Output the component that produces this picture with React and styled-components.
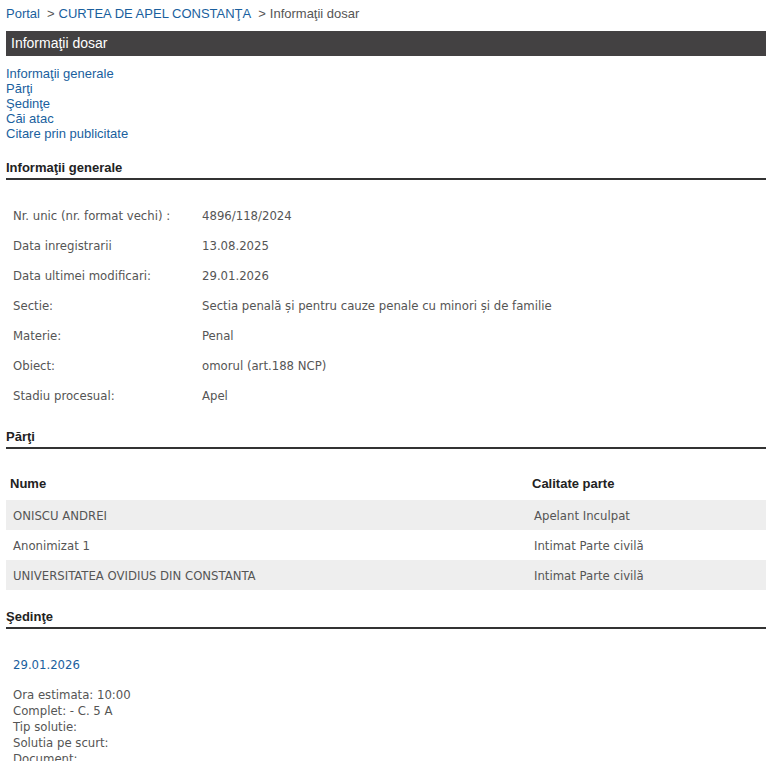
import React from "react";
import styled, { createGlobalStyle } from "styled-components";

const GlobalStyle = createGlobalStyle`
  body {
    margin: 0;
    background: #fff;
    font-family: "Liberation Sans", Arial, sans-serif;
  }
`;

const info = [
  ["Nr. unic (nr. format vechi) :", "4896/118/2024"],
  ["Data inregistrarii", "13.08.2025"],
  ["Data ultimei modificari:", "29.01.2026"],
  ["Sectie:", "Sectia penală și pentru cauze penale cu minori și de familie"],
  ["Materie:", "Penal"],
  ["Obiect:", "omorul (art.188 NCP)"],
  ["Stadiu procesual:", "Apel"],
];

const parti = [
  ["ONISCU ANDREI", "Apelant Inculpat"],
  ["Anonimizat 1", "Intimat Parte civilă"],
  ["UNIVERSITATEA OVIDIUS DIN CONSTANTA", "Intimat Parte civilă"],
];

const sedinta = [
  "Ora estimata: 10:00",
  "Complet: - C. 5 A",
  "Tip solutie:",
  "Solutia pe scurt:",
  "Document:",
];

export default function App() {
  return (
    <>
      <GlobalStyle />
      <Page>
        <Breadcrumb>
          <Crumb href="#">Portal</Crumb>
          <Sep>&gt;</Sep>
          <Crumb href="#">CURTEA DE APEL CONSTANŢA</Crumb>
          <Sep>&gt;</Sep>
          <span>Informaţii dosar</span>
        </Breadcrumb>
        <TitleBar>Informaţii dosar</TitleBar>
        <Nav>
          <NavLink href="#">Informaţii generale</NavLink>
          <NavLink href="#">Părţi</NavLink>
          <NavLink href="#">Şedinţe</NavLink>
          <NavLink href="#">Căi atac</NavLink>
          <NavLink href="#">Citare prin publicitate</NavLink>
        </Nav>

        <SectionTitle>Informaţii generale</SectionTitle>
        <InfoList>
          {info.map(([label, value]) => (
            <InfoRow key={label}>
              <span>{label}</span>
              <span>{value}</span>
            </InfoRow>
          ))}
        </InfoList>

        <SectionTitle>Părţi</SectionTitle>
        <Table>
          <thead>
            <tr>
              <Th>Nume</Th>
              <Th>Calitate parte</Th>
            </tr>
          </thead>
          <tbody>
            {parti.map(([name, role], i) => (
              <Tr key={name} $striped={i % 2 === 0}>
                <Td>{name}</Td>
                <Td $second>{role}</Td>
              </Tr>
            ))}
          </tbody>
        </Table>

        <SectionTitle>Şedinţe</SectionTitle>
        <Hearing>
          <HearingDate href="#">29.01.2026</HearingDate>
          <HearingLines>
            {sedinta.map((line) => (
              <div key={line}>{line}</div>
            ))}
          </HearingLines>
        </Hearing>
      </Page>
    </>
  );
}

const Page = styled.div`
  width: 760px;
  margin-left: 6px;
`;

const Breadcrumb = styled.div`
  display: flex;
  align-items: center;
  height: 26px;
  font-size: 13px;
  color: #555;
`;

const Crumb = styled.a`
  color: #1a5f9e;
  text-decoration: none;
`;

const Sep = styled.span`
  margin: 0 4px 0 7px;
  color: #555;
`;

const TitleBar = styled.div`
  height: 24px;
  margin-top: 5px;
  padding: 0 0 1px 5px;
  display: flex;
  align-items: center;
  background: #434142;
  color: #fff;
  font-size: 14px;
`;

const Nav = styled.nav`
  display: flex;
  flex-direction: column;
  padding-top: 10px;
`;

const NavLink = styled.a`
  color: #1a5f9e;
  text-decoration: none;
  font-size: 13px;
  line-height: 15px;
`;

const SectionTitle = styled.h3`
  margin: 19px 0 0;
  padding-bottom: 2px;
  border-bottom: 2px solid #333;
  font-size: 13px;
  line-height: 16px;
  font-weight: bold;
  color: #222;
`;

const InfoList = styled.div`
  padding: 20px 0 0 7px;
`;

const InfoRow = styled.div`
  display: grid;
  grid-template-columns: 189px 1fr;
  height: 30px;
  align-items: center;
  font-family: "DejaVu Sans Condensed", "DejaVu Sans", sans-serif;
  font-size: 13px;
  color: #555;
`;

const Table = styled.table`
  width: 100%;
  margin-top: 17px;
  border-collapse: collapse;
`;

const Th = styled.th`
  height: 34px;
  padding: 0 4px;
  text-align: left;
  font-size: 13px;
  color: #222;
  &:first-child {
    width: 514px;
  }
`;

const Tr = styled.tr`
  background: ${(p) => (p.$striped ? "#eeeeee" : "#fff")};
`;

const Td = styled.td`
  height: 30px;
  padding: 0 ${(p) => (p.$second ? "6px" : "7px")};
  font-family: "DejaVu Sans Condensed", "DejaVu Sans", sans-serif;
  font-size: 13px;
  color: #555;
`;

const Hearing = styled.div`
  padding: 28px 0 0 7px;
  font-family: "DejaVu Sans Condensed", "DejaVu Sans", sans-serif;
  font-size: 13px;
`;

const HearingDate = styled.a`
  display: block;
  color: #1a5f9e;
  text-decoration: none;
  line-height: 16px;
`;

const HearingLines = styled.div`
  margin-top: 14px;
  color: #555;
  line-height: 16px;
`;
